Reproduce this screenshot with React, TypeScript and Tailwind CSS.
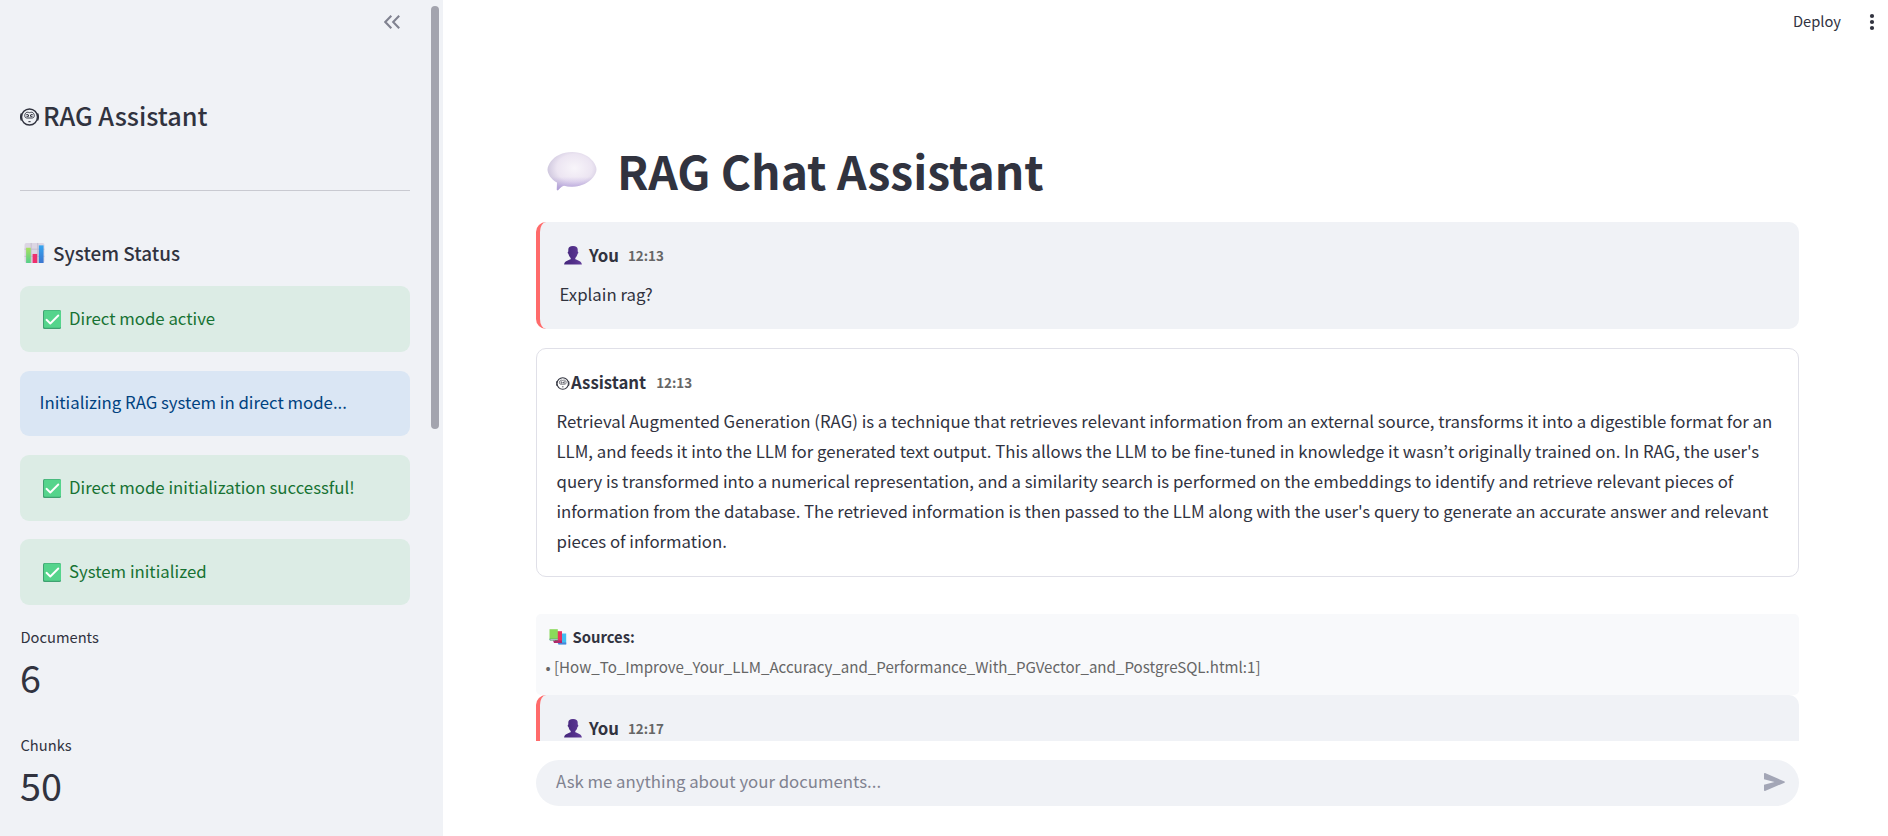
import type { ReactNode } from "react";

function RobotIcon({ className }: { className: string }) {
  return (
    <svg viewBox="0 0 38 36" className={className} fill="none" stroke="#31333f">
      <circle cx="19" cy="18" r="16" strokeWidth="3" />
      <path d="M3 11C.6 14 .6 22 3 25M35 11c2.400 3 2.400 11 0 14" strokeWidth="2.600" />
      <path d="M9.500 15.500c0-4 2-6.500 5-7 2-.3 3.300.8 4.500.8s2.500-1.100 4.500-.8c3 .5 5 3 5 7 0 2.500-1.500 4.500-4 4.500h-11c-2.500 0-4-2-4-4.500Z" strokeWidth="1.900" />
      <path d="M12.500 13.300h4M21.500 13.300h4M13 16.700h4v-3M21 13.700v3h4" strokeWidth="2" />
      <path d="M16.800 27.300h4.400" strokeWidth="2.200" />
    </svg>
  );
}

function ChartIcon({ className }: { className: string }) {
  return (
    <svg viewBox="0 0 22 22" className={className}>
      <defs>
        <linearGradient id="barGreen" x1="0" y1="0" x2="0" y2="1">
          <stop offset="0" stopColor="#a8e05f" />
          <stop offset="1" stopColor="#55cf8a" />
        </linearGradient>
        <linearGradient id="barBlue" x1="0" y1="0" x2="0" y2="1">
          <stop offset="0" stopColor="#35a5f0" />
          <stop offset="1" stopColor="#3b76d0" />
        </linearGradient>
      </defs>
      <rect x="0.500" y="0.500" width="21" height="21" rx="2" fill="#dcd6e3" />
      <path d="M.5 7h21M.5 14.500h21M7.500.5v21M14.300.5v21" stroke="#bfb8ca" strokeWidth=".8" />
      <path d="M2.200 5.500h4.900v16H2.200z" fill="url(#barGreen)" />
      <path d="M9 12h4.800v9.500H9z" fill="#ee2f6e" />
      <path d="M15.500 3h5v18.500h-5z" fill="url(#barBlue)" />
    </svg>
  );
}

function CheckIcon() {
  return (
    <svg viewBox="0 0 18 19" className="h-[19px] w-[18px] shrink-0">
      <rect width="18" height="19" rx="1.500" fill="#3fa171" />
      <rect x="1" y="0.500" width="17" height="17.300" rx="1.200" fill="#55d48c" />
      <path d="M3.500 9.800 7.300 13.500 15.300 5.500" fill="none" stroke="#fff" strokeWidth="1.900" strokeLinecap="round" strokeLinejoin="round" />
    </svg>
  );
}

function BubbleIcon({ className }: { className: string }) {
  const shape =
    "M25 0c9.500 0 17 4 21 9.300 2 2.700 3.500 5.700 3.500 8.200 0 2.700-1.500 5.500-3.500 8C42 30.500 34.500 34.700 25 34.700c-3 0-5.700-.3-8-.9-2 .4-4 2.200-5.500 4-.8.900-1.800.6-1.700-.6l.2-6.700C4 27.500.5 21.500.5 17.500c0-2.500 1.500-5.500 3.500-8.200C8 4 15.500 0 25 0Z";
  return (
    <svg viewBox="0 0 50 39" className={className}>
      <defs>
        <radialGradient id="bubble" cx=".55" cy=".42" r=".6">
          <stop offset="0" stopColor="#f8f5fa" />
          <stop offset=".6" stopColor="#ece5f2" />
          <stop offset="1" stopColor="#c9c1da" />
        </radialGradient>
        <linearGradient id="bubbleShade" x1="0" y1="0" x2="0" y2="1">
          <stop offset=".65" stopColor="#a98fdc" stopOpacity="0" />
          <stop offset="1" stopColor="#a38ad6" stopOpacity=".65" />
        </linearGradient>
      </defs>
      <path d={shape} fill="url(#bubble)" />
      <path d={shape} fill="url(#bubbleShade)" />
    </svg>
  );
}

function UserIcon() {
  return (
    <svg viewBox="0 0 18 19" className="h-[19px] w-[18px] shrink-0">
      <defs>
        <linearGradient id="person" x1="0" y1="0" x2="1" y2="0">
          <stop offset="0" stopColor="#43267a" />
          <stop offset=".6" stopColor="#55318c" />
          <stop offset="1" stopColor="#64419b" />
        </linearGradient>
      </defs>
      <path d="M9 0c3.200 0 4.700 1.200 4.700 3.600v1.900c.9.300.8 2.200-.2 2.400-.4 1.900-1.200 3.200-2.200 4v1.400c2.200 1 6.200 1.700 6.600 5.300H.1c.4-3.600 4.400-4.300 6.600-5.300v-1.400c-1-.8-1.800-2.100-2.200-4-1-.2-1.100-2.100-.2-2.400V3.600C4.300 1.200 5.800 0 9 0Z" fill="url(#person)" />
    </svg>
  );
}

function BooksIcon() {
  return (
    <svg viewBox="0 0 18 16" className="h-4 w-[18px] shrink-0">
      <path d="M9.500 4.500h7.700v10.700H9.500z" fill="#41bdf2" />
      <path d="M8.500 13.500h8.700v2H9.500z" fill="#4a84d8" />
      <path d="M6 2.200h7V13H6z" fill="#e8315f" />
      <path d="M4 11.500h9V14H5z" fill="#b0296c" />
      <path d="M.5.200h8.300v10H.5z" fill="#8ad95b" />
      <path d="M.5 9.700h8.300v1.900H1.500c-.6 0-1-.4-1-1z" fill="#36906d" />
      <path d="M1.300 10.200h7.500v.7H1.300z" fill="#dcd6ef" />
    </svg>
  );
}

function Alert({ tone, children }: { tone: "success" | "info"; children: ReactNode }) {
  return tone === "success" ? (
    <div className="flex h-[66px] items-center gap-[8px] rounded-[9px] bg-[#dcece5] pl-[23px] text-[#177233] last:-mt-px">
      <CheckIcon />
      <span>{children}</span>
    </div>
  ) : (
    <div className="flex h-[65px] items-center rounded-[9px] bg-[#dae6f4] pl-[19.500px] text-[#004280]">
      <span className="-mt-[2px]">{children}</span>
    </div>
  );
}

function Metric({ label, value }: { label: string; value: string }) {
  return (
    <div>
      <div className="pl-[0.500px] text-[14.700px] leading-[24px]">{label}</div>
      <div className="text-[37.800px] leading-[56px]">{value}</div>
    </div>
  );
}

function Sidebar() {
  return (
    <aside className="relative h-full w-[443px] shrink-0 overflow-hidden bg-[#f0f2f6] pr-[33px] pl-[20px]">
      <div className="flex h-[98px] justify-end pt-[15px] pr-[10px]">
        <svg viewBox="0 0 16 14" className="h-[14px] w-4" fill="none" stroke="#808290" strokeWidth="2.100">
          <path d="M7.300.8 1.300 7l6 6.200M15.200.8 9.200 7l6 6.200" />
        </svg>
      </div>
      <h2 className="flex items-center text-[25.300px] leading-[34px] font-medium">
        <RobotIcon className="mt-[3px] mr-[4px] h-[18px] w-[19px]" />
        RAG Assistant
      </h2>
      <hr className="mt-[58px] border-0 border-t border-[#c9cad1]" />
      <h3 className="mt-[49px] flex items-center text-[18.900px] leading-[26px] font-medium">
        <ChartIcon className="mr-[8px] ml-[4px] h-[22px] w-[21px]" />
        System Status
      </h3>
      <div className="mt-[20px] flex flex-col gap-[19px]">
        <Alert tone="success">Direct mode active</Alert>
        <Alert tone="info">Initializing RAG system in direct mode...</Alert>
        <Alert tone="success">Direct mode initialization successful!</Alert>
        <Alert tone="success">System initialized</Alert>
      </div>
      <div className="mt-[20px] flex flex-col gap-[28px]">
        <Metric label="Documents" value="6" />
        <Metric label="Chunks" value="50" />
      </div>
      <div className="absolute top-[6px] right-[4px] h-[423px] w-[8px] rounded-full bg-[#a3a4ae]" />
    </aside>
  );
}

function UserMessage({ time, children }: { time: string; children: ReactNode }) {
  return (
    <div className="h-[107px] rounded-[10px] border-l-4 border-[#ff6b6b] bg-[#f0f2f6] pt-[20px] pl-[19.500px]">
      <div className="flex items-center leading-[27px] font-bold">
        <span className="mr-[7.500px] ml-[4px]">
          <UserIcon />
        </span>
        You
        <span className="ml-[9px] text-[13.400px] text-[#666666]">{time}</span>
      </div>
      <p className="mt-[10px] leading-[30px]">{children}</p>
    </div>
  );
}

export default function App() {
  return (
    <div className="flex h-[836px] w-[1888px] overflow-hidden bg-white font-['Noto_Sans_CJK_KR',sans-serif] text-[16.800px] text-[#31333f]">
      <Sidebar />
      <main className="flex min-w-0 flex-1 flex-col">
        <header className="flex h-[43px] items-center justify-end pr-[14px] text-[14.700px]">
          <span>Deploy</span>
          <svg viewBox="0 0 4 18" className="ml-[29px] h-[18px] w-[4px] overflow-visible" fill="#31333f">
            <circle cx="2" cy="3" r="2.100" />
            <circle cx="2" cy="9" r="2.100" />
            <circle cx="2" cy="15" r="2.100" />
          </svg>
        </header>
        <div className="h-[698px] overflow-hidden pr-[89px] pl-[93px]">
          <h1 className="mt-[96px] flex items-center text-[46.200px] leading-[62px] font-bold">
            <BubbleIcon className="mt-[2px] mr-[20px] ml-[11px] h-[39px] w-[50px]" />
            RAG Chat Assistant
          </h1>
          <div className="mt-[21px]">
            <UserMessage time="12:13">Explain rag?</UserMessage>
          </div>
          <div className="mt-[19px] h-[229px] rounded-[10px] border border-[#e0e0e8] pt-[20px] pr-[20px] pl-[19.500px]">
            <div className="flex items-center leading-[27px] font-bold">
              <RobotIcon className="mt-px mr-[1.500px] -ml-[0.500px] h-[13px] w-[13.500px]" />
              Assistant
              <span className="ml-[10px] text-[13.400px] text-[#666666]">12:13</span>
            </div>
            <p className="mt-[10px] leading-[30px]">
              Retrieval Augmented Generation (RAG) is a technique that retrieves relevant information from an external source, transforms it into a digestible format for an LLM, and feeds it into the LLM for generated text output. This allows the LLM to be fine-tuned in knowledge it wasn’t originally trained on. In RAG, the user's query is transformed into a numerical representation, and a similarity search is performed on the embeddings to identify and retrieve relevant pieces of information from the database. The retrieved information is then passed to the LLM along with the user's query to generate an accurate answer and relevant pieces of information.
            </p>
          </div>
          <div className="mt-[37px] h-[81px] rounded-[5px] bg-[#f8f9fb] px-[9.500px] pt-[8px] text-[15.100px] leading-[29px]">
            <div className="flex items-center text-[14.800px] leading-[30px] font-bold">
              <span className="mr-[6px] ml-[3px]">
                <BooksIcon />
              </span>
              Sources:
            </div>
            <div className="text-[#666666]">• [How_To_Improve_Your_LLM_Accuracy_and_Performance_With_PGVector_and_PostgreSQL.html:1]</div>
          </div>
          <UserMessage time="12:17">{null}</UserMessage>
        </div>
        <div className="mt-[19px] mr-[89px] ml-[93px] flex h-[46px] items-center justify-between rounded-full bg-[#f0f2f6] pr-[14px] pl-[20px] text-[#808290]">
          <span className="-mt-[2px]">Ask me anything about your documents...</span>
          <svg viewBox="0 0 21 18" className="-mt-[2px] h-[18px] w-[21px]" fill="#a3a6b6">
            <path d="M0 .8C0 .2.500-.1 1 .1l19.500 8.300c.6.300.6 1 0 1.300L1 17.900c-.5.200-1-.1-1-.7v-5.400L10.500 9 0 6.200z" />
          </svg>
        </div>
      </main>
    </div>
  );
}
